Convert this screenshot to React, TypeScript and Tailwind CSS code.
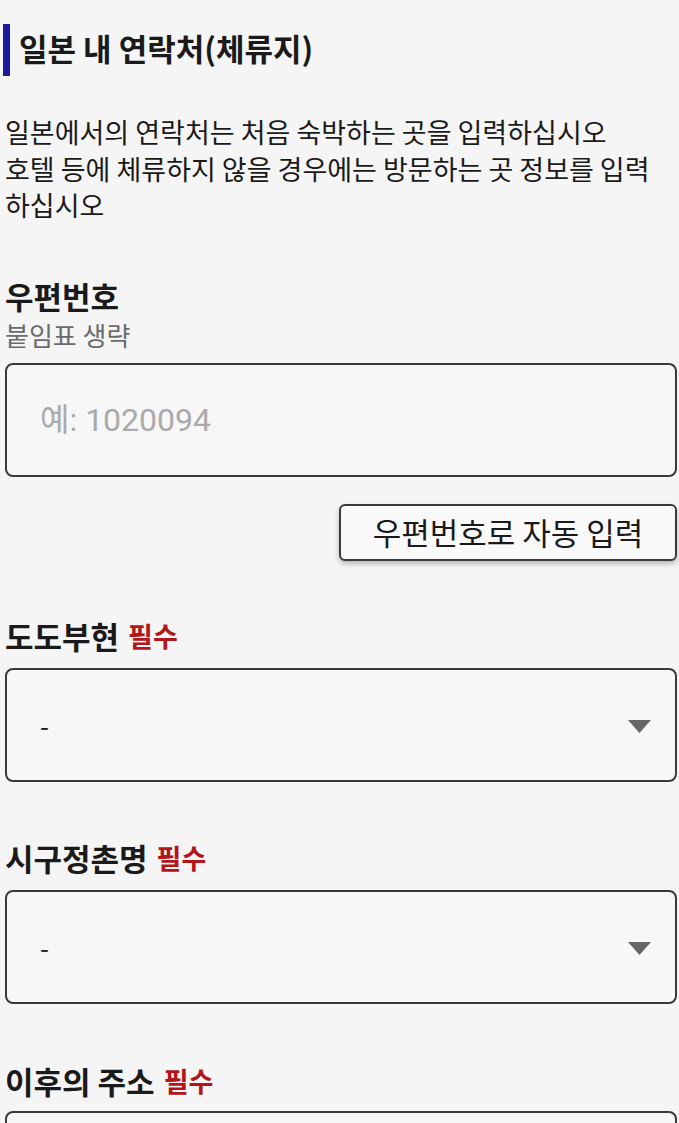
import React from "react";

const FONT = { fontFamily: '"Noto Sans CJK KR", "Noto Sans", sans-serif' };

const Required = () => (
  <span className="ml-[9px] text-[27px] font-bold text-[#b3151b]">필수</span>
);

const SelectBox = () => (
  <div className="flex h-[114px] items-center justify-between rounded-lg border-2 border-[#3a3a3a] bg-[#f7f7f7] pl-[33px] pr-[24px]">
    <span className="text-[26px] text-[#222]">-</span>
    <svg width="23" height="13" viewBox="0 0 23 13" className="mt-[4px]">
      <polygon points="0,0 23,0 11.5,13" fill="#666" />
    </svg>
  </div>
);

export default function App() {
  return (
    <div className="min-h-screen bg-[#f5f5f5] pl-[5px] pr-[2px] text-[#1a1a1a]" style={FONT}>
      <div className="pt-[24px]">
        <h2 className="-ml-[2px] flex h-[52px] items-center border-l-[7px] border-[#1c1a9c] pb-[6px] pl-[9px] text-[31px] font-bold leading-none">
          일본 내 연락처(체류지)
        </h2>
      </div>

      <p className="mt-[38px] text-[27px] leading-[36.5px] text-[#1a1a1a]">
        일본에서의 연락처는 처음 숙박하는 곳을 입력하십시오
        <br />
        호텔 등에 체류하지 않을 경우에는 방문하는 곳 정보를 입력
        <br />
        하십시오
      </p>

      <div className="mt-[54px]">
        <div className="text-[31px] font-bold leading-[36px]">우편번호</div>
        <div className="mt-[5px] text-[26px] leading-[32px] text-[#6b6b6b]">붙임표 생략</div>
        <div className="mt-[12px] flex h-[114px] items-center rounded-lg border-2 border-[#3a3a3a] bg-[#f7f7f7] pl-[33px]">
          <span className="text-[32px] text-[#aaaaaa]" style={{ fontFamily: 'Roboto, "Noto Sans CJK KR", sans-serif' }}>
            예: 1020094
          </span>
        </div>
        <div className="mt-[27px] flex justify-end">
          <button className="flex h-[57px] w-[338px] items-center justify-center rounded-md border-2 border-[#3a3a3a] bg-[#f9f9f9] text-[31px] text-[#1a1a1a] shadow-[0_3px_5px_rgba(0,0,0,0.25)]">
            우편번호로 자동 입력
          </button>
        </div>
      </div>

      <div className="mt-[57px]">
        <div className="flex items-center text-[31px] font-bold leading-[36px]">
          도도부현
          <Required />
        </div>
        <div className="mt-[14px]">
          <SelectBox />
        </div>
      </div>

      <div className="mt-[58px]">
        <div className="flex items-center text-[31px] font-bold leading-[36px]">
          시구정촌명
          <Required />
        </div>
        <div className="mt-[14px]">
          <SelectBox />
        </div>
      </div>

      <div className="mt-[59px]">
        <div className="flex items-center text-[31px] font-bold leading-[36px]">
          이후의 주소
          <Required />
        </div>
        <div className="mt-[12px]">
          <div className="h-[114px] rounded-lg border-2 border-[#3a3a3a] bg-[#f7f7f7]" />
        </div>
      </div>
    </div>
  );
}
